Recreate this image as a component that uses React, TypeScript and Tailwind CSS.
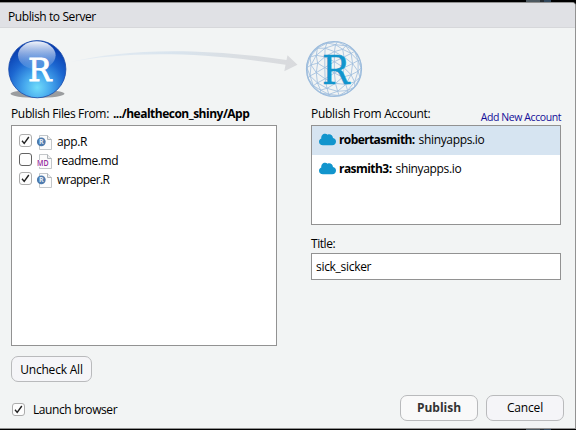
import React from "react";

type CheckProps = { checked?: boolean; dark?: boolean };

function CheckBox({ checked, dark }: CheckProps) {
  return (
    <span
      className={`flex h-[13px] w-[13px] shrink-0 items-center justify-center rounded-[3px] border bg-[#fdfdfd] ${
        dark ? "border-[#626262]" : "border-[#adadad]"
      }`}
    >
      {checked && (
        <svg width="9" height="9" viewBox="0 0 9 9">
          <path d="M1 4.8 3.2 7.4 7.8 1" fill="none" stroke="#222" strokeWidth="1.4" />
        </svg>
      )}
    </span>
  );
}

function FileIcon({ kind }: { kind: string }) {
  return (
    <svg width="16" height="16" viewBox="0 0 16 16" className="block shrink-0">
      <path d="M2.5 .5H10.5L14.5 4.5V14.5H2.5Z" fill="#fcfcfc" stroke="#c3c7ca" />
      <path d="M10.5 .5V4.5H14.5" fill="#eee" stroke="#b0b5b9" />
      {kind === "r" ? (
        <>
          <circle cx="4.3" cy="6.8" r="4.4" fill="#4d7bae" />
          <text x="4.3" y="9.3" textAnchor="middle" fontSize="7" fontWeight="700" fill="#e4edf6" fontFamily="Open Sans, sans-serif">R</text>
        </>
      ) : (
        <>
          <rect x="0" y="6" width="11" height="7" fill="#fcfcfc" />
          <text x="0" y="12" textLength="11.5" lengthAdjust="spacingAndGlyphs" fontSize="8" fontWeight="600" fill="#962b9e" fontFamily="Open Sans, sans-serif">MD</text>
        </>
      )}
    </svg>
  );
}

function Cloud() {
  return (
    <svg width="17" height="13" viewBox="0 0 17 13" className="shrink-0">
      <path d="M4 12.2C1.6 12.2 0 10.8 0 8.8C0 7.2 1 6.1 2.3 5.6C2 2.9 3.6 .8 6.2 .8C7.2 .8 8 1.1 8.6 1.7C10.8 .5 13.8 2 14 5C15.9 5.3 17 6.7 17 8.5C17 10.8 15.5 12.2 13.2 12.2Z" fill="#1295cd" />
    </svg>
  );
}

function BlueBall() {
  return (
    <svg width="60" height="62" viewBox="7 39 60 62">
      <defs>
        <radialGradient id="ball" cx="50%" cy="82%" r="76%">
          <stop offset="0" stopColor="#70dcfa" />
          <stop offset=".3" stopColor="#47a9ee" />
          <stop offset=".65" stopColor="#1c66d0" />
          <stop offset="1" stopColor="#083cae" />
        </radialGradient>
        <linearGradient id="gloss" x1="0" y1="0" x2="0" y2="1">
          <stop offset="0" stopColor="#fff" stopOpacity=".95" />
          <stop offset="1" stopColor="#8fb4ea" stopOpacity=".2" />
        </linearGradient>
      </defs>
      <ellipse cx="37.5" cy="93.8" rx="27" ry="4" fill="#9b9d9f" />
      <circle cx="37.3" cy="69.2" r="28.6" fill="url(#ball)" stroke="#1b4baa" strokeWidth=".8" />
      <ellipse cx="36.8" cy="55.3" rx="18.8" ry="14" fill="url(#gloss)" />
      <text x="28" y="80.6" textLength="23.5" lengthAdjust="spacingAndGlyphs" fontSize="32" fill="#fff" stroke="#fff" strokeWidth=".8" fontFamily="DejaVu Serif, serif">R</text>
    </svg>
  );
}

function Arrow() {
  return (
    <svg width="231" height="40" viewBox="67 42 231 40">
      <defs>
        <linearGradient id="sweep">
          <stop offset="0" stopColor="#e6edf3" />
          <stop offset=".45" stopColor="#d9e4ee" />
          <stop offset=".75" stopColor="#dadee2" />
          <stop offset="1" stopColor="#d9dadd" />
        </linearGradient>
      </defs>
      <path d="M69 62.3C120 50 190 46 286.5 60L287.5 55.2 297.5 64.8 284.3 71.2 285.5 64.8C190 50 120 52.5 69 62.3Z" fill="url(#sweep)" />
    </svg>
  );
}

type Vec = [number, number, number];

// Front half of a geodesic sphere, projected onto the logo's disc.
function geodesicPath(cx: number, cy: number, radius: number, freq: number): string {
  const g = (1 + Math.sqrt(5)) / 2;
  const v: Vec[] = [
    [-1, g, 0], [1, g, 0], [-1, -g, 0], [1, -g, 0],
    [0, -1, g], [0, 1, g], [0, -1, -g], [0, 1, -g],
    [g, 0, -1], [g, 0, 1], [-g, 0, -1], [-g, 0, 1],
  ];
  const faces = [
    [0, 11, 5], [0, 5, 1], [0, 1, 7], [0, 7, 10], [0, 10, 11],
    [1, 5, 9], [5, 11, 4], [11, 10, 2], [10, 7, 6], [7, 1, 8],
    [3, 9, 4], [3, 4, 2], [3, 2, 6], [3, 6, 8], [3, 8, 9],
    [4, 9, 5], [2, 4, 11], [6, 2, 10], [8, 6, 7], [9, 8, 1],
  ];
  const project = ([x, y, z]: Vec): Vec => {
    const n = Math.hypot(x, y, z);
    const a = 0.38;
    const b = 0.27;
    const x1 = (x * Math.cos(a) + z * Math.sin(a)) / n;
    const z1 = (z * Math.cos(a) - x * Math.sin(a)) / n;
    const y1 = y / n;
    return [
      cx + radius * x1,
      cy + radius * (y1 * Math.cos(b) - z1 * Math.sin(b)),
      y1 * Math.sin(b) + z1 * Math.cos(b),
    ];
  };
  const edges = new Set<string>();
  for (const [a, b, c] of faces) {
    const at = (i: number, j: number) => {
      const k = freq - i - j;
      return project([0, 1, 2].map((d) => v[a][d] * i + v[b][d] * j + v[c][d] * k) as Vec);
    };
    const join = (p: Vec, q: Vec) => {
      if (p[2] + q[2] < 0) return;
      const ends = [p, q].map((e) => `${e[0].toFixed(1)} ${e[1].toFixed(1)}`).sort();
      edges.add(`M${ends[0]}L${ends[1]}`);
    };
    for (let i = 0; i < freq; i++) {
      for (let j = 0; j < freq - i; j++) {
        join(at(i, j), at(i + 1, j));
        join(at(i, j), at(i, j + 1));
        join(at(i + 1, j), at(i, j + 1));
      }
    }
  }
  return [...edges].join("");
}

const mesh = geodesicPath(334, 69, 27.5, 3);

function Globe() {
  return (
    <svg width="58" height="58" viewBox="305 40 58 58">
      <circle cx="334" cy="69" r="27.5" fill="none" stroke="#9bbbdc" strokeWidth="1.2" />
      <path d={mesh} fill="none" stroke="#9dbcdd" strokeWidth=".8" />
      <text x="322" y="83.5" textLength="27.5" lengthAdjust="spacingAndGlyphs" fontSize="40" fill="#1295cd" stroke="#1295cd" strokeWidth=".5" fontFamily="DejaVu Serif, serif">R</text>
    </svg>
  );
}

// Sliver of the window behind the dialog.
function Backdrop() {
  return (
    <div className="flex h-[2px] pl-[526px]">
      <span className="w-[14px] bg-[#4d5960]" />
      <span className="w-[4px] bg-[#252d33]" />
      <span className="w-[7px] bg-[#31475c]" />
    </div>
  );
}

const files = [
  { name: "app.R", kind: "r", checked: true, track: "tracking-[-0.35px]" },
  { name: "readme.md", kind: "md", checked: false, track: "tracking-[-0.45px]" },
  { name: "wrapper.R", kind: "r", checked: true, track: "tracking-[-0.6px]" },
];

const accounts = [
  { user: "robertasmith:", selected: true, track: "tracking-[-0.6px]" },
  { user: "rasmith3:", selected: false, track: "tracking-[-0.55px]" },
];

export default function App() {
  return (
    <div className="h-[430px] w-[576px] overflow-hidden bg-black font-['Open_Sans','Noto_Sans',sans-serif] text-[12px] leading-[16px] text-black">
      <Backdrop />
      <div className="flex h-[427px] flex-col overflow-hidden rounded-tr-[4px] border-t border-r border-b border-[#929292] bg-[#f2f4f4]">
        <header className="flex h-[25px] shrink-0 items-center border-b border-[#d6d7da] bg-[#e0e1e5] pt-[3px] pl-2">
          <span className="tracking-[-0.4px]">Publish to Server</span>
        </header>

        <div className="flex h-[77px] shrink-0 pt-[11px] pl-[7px]">
          <BlueBall />
          <div className="pt-[3px]"><Arrow /></div>
          <div className="pt-[1px] pl-[7px]"><Globe /></div>
        </div>

        <main className="flex h-[279px] shrink-0 gap-[34px] pl-[11px]">
          <section className="w-[266px]">
            <h2 className="h-5 pt-px whitespace-nowrap">
              <span className="tracking-[-0.35px]">Publish Files From:</span>
              <b className="ml-1 tracking-[-0.5px]">.../healthecon_shiny/App</b>
            </h2>
            <ul className="h-[221px] border border-[#929292] bg-white pt-[5px] pl-[7px]">
              {files.map((f) => (
                <li key={f.name} className="flex h-[19px] items-center">
                  <CheckBox checked={f.checked} dark={!f.checked} />
                  <span className="mt-[5px] ml-[5px]"><FileIcon kind={f.kind} /></span>
                  <span className={`ml-1 pt-[2px] ${f.track}`}>{f.name}</span>
                </li>
              ))}
            </ul>
            <button className="mt-[10px] h-[26px] w-[81px] rounded-[7px] border border-[#b9babc] bg-[#f5f5f8] pt-px tracking-[-0.2px]">Uncheck All</button>
          </section>

          <section className="w-[250px]">
            <div className="flex h-5 justify-between whitespace-nowrap">
              <span className="pt-px tracking-[-0.27px]">Publish From Account:</span>
              <a className="pt-1 text-[10.5px] tracking-[-0.42px] text-[#120e98]">Add New Account</a>
            </div>
            <ul className="h-[100px] border border-[#929292] bg-white">
              {accounts.map((a) => (
                <li key={a.user} className={`flex h-[29px] items-center pb-[2px] pl-[7px] ${a.selected ? "bg-[#d6e4f1]" : ""}`}>
                  <Cloud />
                  <b className={`ml-[3px] ${a.track}`}>{a.user}</b>
                  <span className="ml-[4px] tracking-[-0.35px]">shinyapps.io</span>
                </li>
              ))}
            </ul>
            <label className="mt-[10px] block h-[18px] pt-px tracking-[-0.45px]">Title:</label>
            <div className="flex h-[27px] items-center border border-[#929292] bg-white pt-px pl-1 tracking-[-0.3px]">sick_sicker</div>
          </section>
        </main>

        <footer className="flex justify-between pt-[11px] pr-[11px] pl-3">
          <div className="flex h-[26px] items-center pt-[2px]">
            <CheckBox checked />
            <span className="ml-2 pt-px tracking-[-0.42px]">Launch browser</span>
          </div>
          <div className="flex gap-2">
            <button className="h-[26px] w-[78px] rounded-[7px] border border-[#b9babc] bg-[#f9f9f9] font-bold text-[#333]">Publish</button>
            <button className="h-[26px] w-[78px] rounded-[7px] border border-[#b9babc] bg-[#f5f5f8] tracking-[-0.15px]">Cancel</button>
          </div>
        </footer>
      </div>
      <Backdrop />
    </div>
  );
}
